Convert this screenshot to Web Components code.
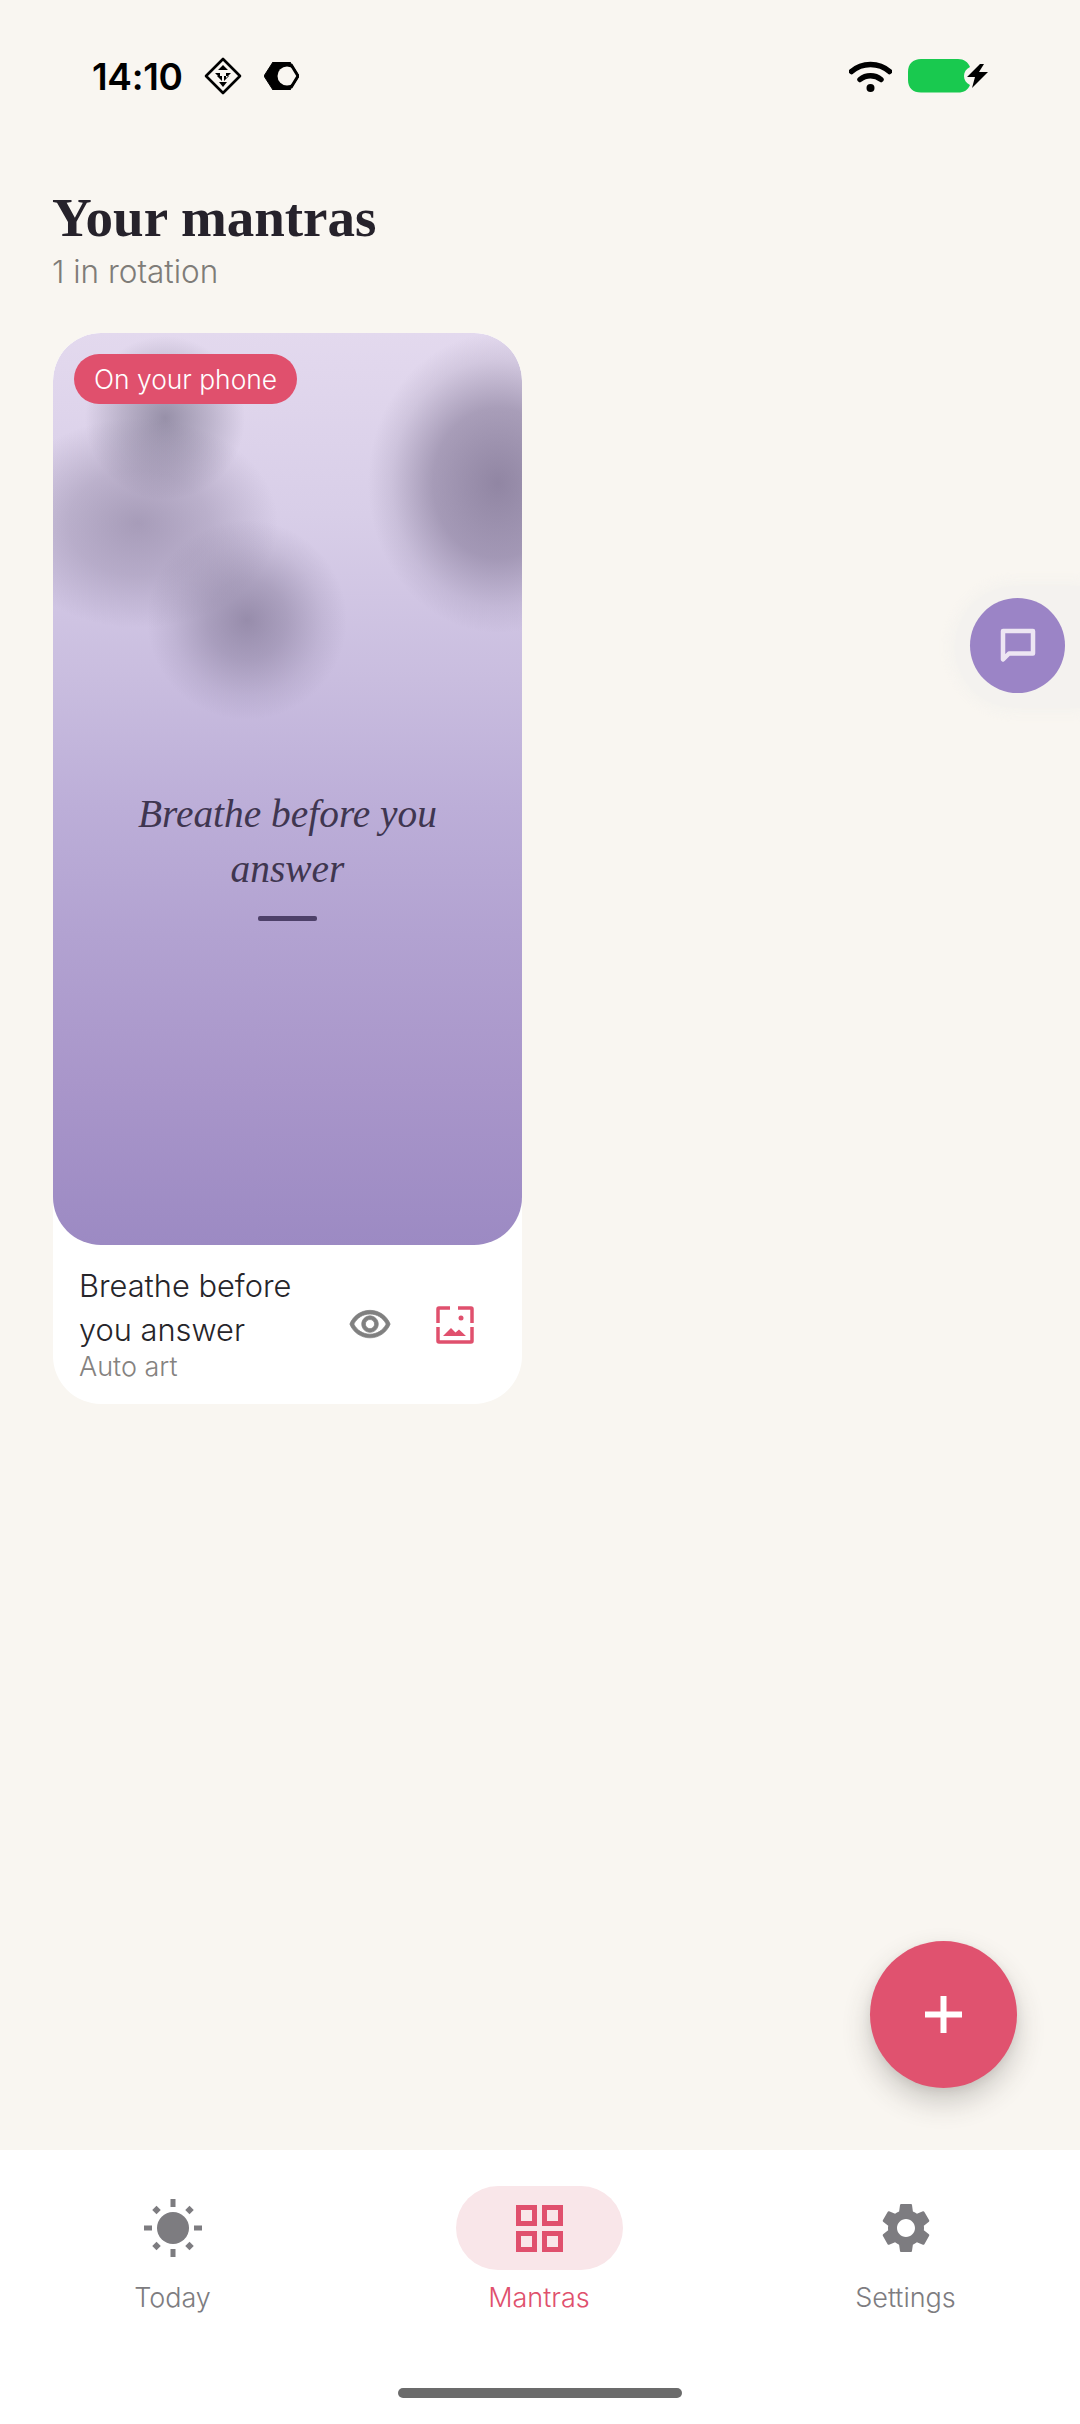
<!DOCTYPE html>
<html>
<head>
<meta charset="utf-8">
<title>Your mantras</title>
<style>
  html, body { margin: 0; padding: 0; background: #f9f6f1; }
  body { font-family: "Inter", "Liberation Sans", sans-serif; }
</style>
</head>
<body>
<app-shell>
  <status-bar slot="status"></status-bar>
  <page-header slot="header" title="Your mantras" subtitle="1 in rotation"></page-header>
  <mantra-card quote="Breathe before you answer" art="Auto art" badge="On your phone"></mantra-card>
  <chat-tab slot="overlay"></chat-tab>
  <add-fab slot="overlay"></add-fab>
  <bottom-nav slot="nav">
    <nav-item label="Today" icon="today"></nav-item>
    <nav-item label="Mantras" icon="mantras" active></nav-item>
    <nav-item label="Settings" icon="settings"></nav-item>
  </bottom-nav>
</app-shell>

<script>
class AppShell extends HTMLElement {
  constructor() {
    super();
    this.attachShadow({ mode: "open" });
    this.shadowRoot.innerHTML = `
      <style>
        :host { display: flex; flex-direction: column; position: relative; width: 1080px; height: 2424px; overflow: hidden; background: #f9f6f1; }
        main { flex: 1; padding: 41px 53px 0; display: grid; grid-template-columns: 469px; align-content: start; }
      </style>
      <slot name="status"></slot>
      <slot name="header"></slot>
      <main><slot></slot></main>
      <slot name="nav"></slot>
      <slot name="overlay"></slot>
    `;
  }
}

class StatusBar extends HTMLElement {
  constructor() {
    super();
    this.attachShadow({ mode: "open" });
    this.shadowRoot.innerHTML = `
      <style>
        :host { display: flex; align-items: center; height: 152px; margin-bottom: 34px; padding: 0 80px 0 92px; box-sizing: border-box; color: #000; }
        .time { font: 600 37px/1 "Inter", sans-serif; letter-spacing: -0.3px; width: 90px; white-space: nowrap; }
        .left { display: flex; align-items: center; gap: 22px; }
        .right { margin-left: auto; display: flex; align-items: center; gap: 16px; }
        svg { display: block; }
      </style>
      <div class="left">
        <span class="time">14:10</span>
        <svg width="38" height="38" viewBox="0 0 38 38">
          <path d="M19 2 36 19 19 36 2 19Z" fill="none" stroke="#000" stroke-width="2.6" stroke-linejoin="round"/>
          <path d="M19 8 24 13 19 13ZM19 8 14 13 19 13ZM11 16 16 16 16 21ZM27 16 22 16 22 21ZM13 19 18 19 18 24ZM20 19 25 19 20 24ZM15 25 19 25 19 30ZM19 25 23 25 19 30Z" fill="#000"/>
        </svg>
        <svg width="35" height="28" viewBox="0 0 35 28">
          <path d="M9 0H26L35 14 26 28H9L0 14Z" fill="#000" stroke="#000" stroke-width="1" stroke-linejoin="round"/>
          <circle cx="23" cy="14" r="9.500" fill="#f9f6f1"/>
          <path d="M27 2.500 34 14 27 25.500" fill="none" stroke="#000" stroke-width="3" stroke-linejoin="round"/>
        </svg>
      </div>
      <div class="right">
        <svg width="43" height="32" viewBox="0 0 43 32">
          <path d="M2.500 11.500C13 2 30 2 40.500 11.500" fill="none" stroke="#000" stroke-width="5.500" stroke-linecap="round"/>
          <path d="M11 19.500C17 14.500 26 14.500 32 19.500" fill="none" stroke="#000" stroke-width="5.500" stroke-linecap="round"/>
          <circle cx="21.500" cy="28" r="4" fill="#000"/>
        </svg>
        <svg width="92" height="34" viewBox="0 0 92 34">
          <path d="M13 0H50C56 0 60 3 62 8 58 10 56 13 56 17 56 21 58 24 62 26 60 31 56 33.500 50 33.500H13C5 33.500 0 29 0 21V13C0 5 5 0 13 0Z" fill="#19c94f"/>
          <path d="M72 5 59 18H67L64 29 80 13H71L76 5Z" fill="#000"/>
        </svg>
      </div>
    `;
  }
}

class PageHeader extends HTMLElement {
  constructor() {
    super();
    this.attachShadow({ mode: "open" });
    this.shadowRoot.innerHTML = `
      <style>
        :host { display: block; padding: 0 52px; }
        h1 { margin: 0; font: 700 55px/64px "Liberation Serif", serif; color: #26222b; white-space: nowrap; }
        p { margin: 2px 0 0; font: 300 31.500px/40px "Inter", sans-serif; color: #7f7c78; }
      </style>
      <h1></h1>
      <p></p>
    `;
  }
  connectedCallback() {
    this.shadowRoot.querySelector("h1").textContent = this.getAttribute("title");
    this.shadowRoot.querySelector("p").textContent = this.getAttribute("subtitle");
  }
}

class MantraCard extends HTMLElement {
  constructor() {
    super();
    this.attachShadow({ mode: "open" });
    this.shadowRoot.innerHTML = `
      <style>
        :host { display: block; background: #fff; border-radius: 48px; overflow: hidden; }
        .art {
          position: relative; height: 912px; border-radius: 48px; box-sizing: border-box;
          display: flex; flex-direction: column; align-items: center; padding-top: 454px;
          background:
            radial-gradient(ellipse 100px 100px at 194px 287px, rgba(100,90,120,.52), rgba(100,90,120,.34) 40%, rgba(100,90,120,.12) 75%, rgba(100,90,120,0)),
            radial-gradient(ellipse 140px 105px at 85px 190px, rgba(100,88,120,.42), rgba(100,88,120,.26) 50%, rgba(100,88,120,0)),
            radial-gradient(ellipse 80px 82px at 112px 85px, rgba(100,95,120,.58), rgba(100,95,120,.28) 55%, rgba(100,95,120,0)),
            radial-gradient(ellipse 130px 150px at 445px 150px, rgba(100,88,120,.62), rgba(100,88,120,.44) 50%, rgba(100,88,120,.12) 82%, rgba(100,88,120,0)),
            linear-gradient(180deg, #e3d9ee 0%, #d8cee8 20%, #c9bddf 38%, #bcaed8 52%, #b2a2d1 66%, #a996ca 82%, #9c8ac3 100%);
        }
        .badge {
          position: absolute; left: 21px; top: 21px; height: 50px; padding: 0 20px; box-sizing: border-box;
          display: flex; align-items: center; border-radius: 25px; background: #e0506d; color: #fff;
          font: 300 26.400px/1 "Inter", sans-serif; white-space: nowrap;
        }
        .quote { width: 340px; text-align: center; font: italic 400 39.400px/55px "Liberation Serif", serif; color: #3f3650; }
        .rule { width: 59px; height: 5px; margin-top: 19px; background: #4d4069; border-radius: 2px; }
        .meta { display: flex; align-items: center; padding: 19px 26px 22px; }
        .text { flex: 1; min-width: 0; }
        .title { width: 240px; font: 300 30.800px/44px "Inter", sans-serif; color: #26252a; }
        .art-label { font: 300 27px/30px "Inter", sans-serif; color: #85827f; }
        .actions { display: flex; align-items: center; gap: 44px; margin: 3px 22px 0 0; }
        svg { display: block; }
      </style>
      <div class="art">
        <span class="badge"></span>
        <div class="quote"></div>
        <div class="rule"></div>
      </div>
      <div class="meta">
        <div class="text"><div class="title"></div><div class="art-label"></div></div>
        <div class="actions">
          <svg width="44" height="44" viewBox="0 0 24 24" fill="#808080" stroke="#808080" stroke-width=".4"><path d="M12 6c3.790 0 7.170 2.130 8.820 5.500C19.170 14.870 15.790 17 12 17s-7.170-2.130-8.820-5.500C4.830 8.130 8.210 6 12 6m0-2C7 4 2.730 7.110 1 11.500 2.730 15.890 7 19 12 19s9.270-3.110 11-7.500C21.270 7.110 17 4 12 4zm0 5c1.380 0 2.500 1.120 2.500 2.500S13.380 14 12 14s-2.500-1.120-2.500-2.500S10.620 9 12 9m0-2c-2.480 0-4.500 2.020-4.500 4.500S9.520 16 12 16s4.500-2.020 4.500-4.500S14.480 7 12 7z"/></svg>
          <svg width="38" height="38" viewBox="0 0 38 38">
            <path d="M2 17V3Q2 2 3 2H14M22 2H35Q36 2 36 3V17M36 21V35Q36 36 35 36H3Q2 36 2 35V21" fill="none" stroke="#e0506d" stroke-width="3.500"/>
            <circle cx="25" cy="12" r="2.500" fill="#e0506d"/>
            <path d="M7 30 15 22 19.500 26.500 23 23.500 30 30Z" fill="#e0506d"/>
          </svg>
        </div>
      </div>
    `;
  }
  connectedCallback() {
    const root = this.shadowRoot;
    root.querySelector(".badge").textContent = this.getAttribute("badge");
    root.querySelector(".quote").textContent = this.getAttribute("quote");
    root.querySelector(".title").textContent = this.getAttribute("quote");
    root.querySelector(".art-label").textContent = this.getAttribute("art");
  }
}

class ChatTab extends HTMLElement {
  constructor() {
    super();
    this.attachShadow({ mode: "open" });
    this.shadowRoot.innerHTML = `
      <style>
        :host {
          position: absolute; left: 955px; top: 586px; width: 125px; height: 122px; box-sizing: border-box;
          padding: 12px 0 0 15px; background: #f4f2ef; border-radius: 61px 0 0 61px;
          box-shadow: 0 0 12px 4px rgba(243,241,237,.8);
        }
        button { display: flex; align-items: center; justify-content: center; width: 95px; height: 95px; padding: 0; border: 0; border-radius: 50%; background: #9b84c6; }
        svg { display: block; }
      </style>
      <button aria-label="Feedback">
        <svg width="36" height="36" viewBox="0 0 36 36"><path d="M3 3H33V25.500H9L3 31.500Z" fill="none" stroke="#ede6f3" stroke-width="4.500" stroke-linejoin="round"/></svg>
      </button>
    `;
  }
}

class AddFab extends HTMLElement {
  constructor() {
    super();
    this.attachShadow({ mode: "open" });
    this.shadowRoot.innerHTML = `
      <style>
        :host {
          position: absolute; left: 870px; top: 1941px; width: 147px; height: 147px; border-radius: 50%;
          background: #e0526f; display: flex; align-items: center; justify-content: center;
          box-shadow: 0 14px 28px rgba(60,55,50,.24), 0 3px 8px rgba(60,55,50,.08);
        }
      </style>
      <svg width="37" height="37" viewBox="0 0 37 37" fill="#fff"><path d="M15.500 0h6v15.500H37v6H21.500V37h-6V21.500H0v-6h15.500z"/></svg>
    `;
  }
}

class BottomNav extends HTMLElement {
  constructor() {
    super();
    this.attachShadow({ mode: "open" });
    this.shadowRoot.innerHTML = `
      <style>
        :host { display: block; position: relative; height: 274px; background: #fff; box-sizing: border-box; padding: 36px 0 0; }
        .items { display: grid; grid-template-columns: 173px 1fr 173px; padding: 0 88px 0 86px; }
        .home { position: absolute; left: 398px; top: 238px; width: 284px; height: 10px; border-radius: 5px; background: #6b6b6b; }
      </style>
      <div class="items"><slot></slot></div>
      <div class="home"></div>
    `;
  }
}

const NAV_ICONS = {
  today: `<svg width="60" height="60" viewBox="0 0 60 60" fill="#7d7c80"><circle cx="30" cy="30" r="16"/><rect x="27.500" y="1" width="5" height="8"/><rect x="27.500" y="51" width="5" height="8"/><rect x="1" y="27.500" width="8" height="5"/><rect x="51" y="27.500" width="8" height="5"/><rect x="10.500" y="9" width="6" height="6" transform="rotate(45 13.500 12)"/><rect x="43.500" y="9" width="6" height="6" transform="rotate(45 46.500 12)"/><rect x="10.500" y="45" width="6" height="6" transform="rotate(45 13.500 48)"/><rect x="43.500" y="45" width="6" height="6" transform="rotate(45 46.500 48)"/></svg>`,
  mantras: `<svg width="47" height="47" viewBox="0 0 47 47" fill="none" stroke="#e0506d" stroke-width="5"><rect x="2.500" y="2.500" width="16" height="16"/><rect x="28.500" y="2.500" width="16" height="16"/><rect x="2.500" y="28.500" width="16" height="16"/><rect x="28.500" y="28.500" width="16" height="16"/></svg>`,
  settings: `<svg width="60" height="60" viewBox="0 0 24 24" fill="#7d7c80"><path d="M19.140 12.940c.04-.3.06-.61.06-.94 0-.32-.02-.64-.07-.94l2.030-1.580c.18-.14.23-.41.12-.61l-1.920-3.320c-.12-.22-.37-.29-.59-.22l-2.390.96c-.5-.38-1.030-.7-1.620-.94l-.36-2.540c-.04-.24-.24-.41-.48-.41h-3.840c-.24 0-.43.17-.47.41l-.36 2.540c-.59.24-1.130.57-1.620.94l-2.390-.96c-.22-.08-.47 0-.59.22L2.740 8.870c-.12.21-.08.47.12.61l2.030 1.580c-.05.3-.09.63-.09.94s.02.64.07.94l-2.030 1.580c-.18.14-.23.41-.12.61l1.920 3.320c.12.22.37.29.59.22l2.390-.96c.5.38 1.030.7 1.620.94l.36 2.540c.05.24.24.41.48.41h3.840c.24 0 .44-.17.47-.41l.36-2.540c.59-.24 1.130-.56 1.620-.94l2.390.96c.22.08.47 0 .59-.22l1.920-3.320c.12-.22.07-.47-.12-.61l-2.010-1.580zM12 15.600c-1.980 0-3.600-1.620-3.600-3.600s1.620-3.600 3.600-3.600 3.600 1.620 3.600 3.600-1.620 3.600-3.600 3.600z"/></svg>`
};

class NavItem extends HTMLElement {
  constructor() {
    super();
    this.attachShadow({ mode: "open" });
    this.shadowRoot.innerHTML = `
      <style>
        :host { display: flex; flex-direction: column; align-items: center; gap: 10px; color: #7d7c80; }
        :host([active]) { color: #e0506d; }
        .pill { width: 167px; height: 84px; border-radius: 42px; display: flex; align-items: center; justify-content: center; }
        :host([active]) .pill { background: #f9e6e9; }
        .label { font: 300 27px/36px "Inter", sans-serif; }
      </style>
      <div class="pill"></div>
      <div class="label"></div>
    `;
  }
  connectedCallback() {
    this.shadowRoot.querySelector(".pill").innerHTML = NAV_ICONS[this.getAttribute("icon")];
    this.shadowRoot.querySelector(".label").textContent = this.getAttribute("label");
  }
}

customElements.define("app-shell", AppShell);
customElements.define("status-bar", StatusBar);
customElements.define("page-header", PageHeader);
customElements.define("mantra-card", MantraCard);
customElements.define("chat-tab", ChatTab);
customElements.define("add-fab", AddFab);
customElements.define("bottom-nav", BottomNav);
customElements.define("nav-item", NavItem);
</script>
</body>
</html>
